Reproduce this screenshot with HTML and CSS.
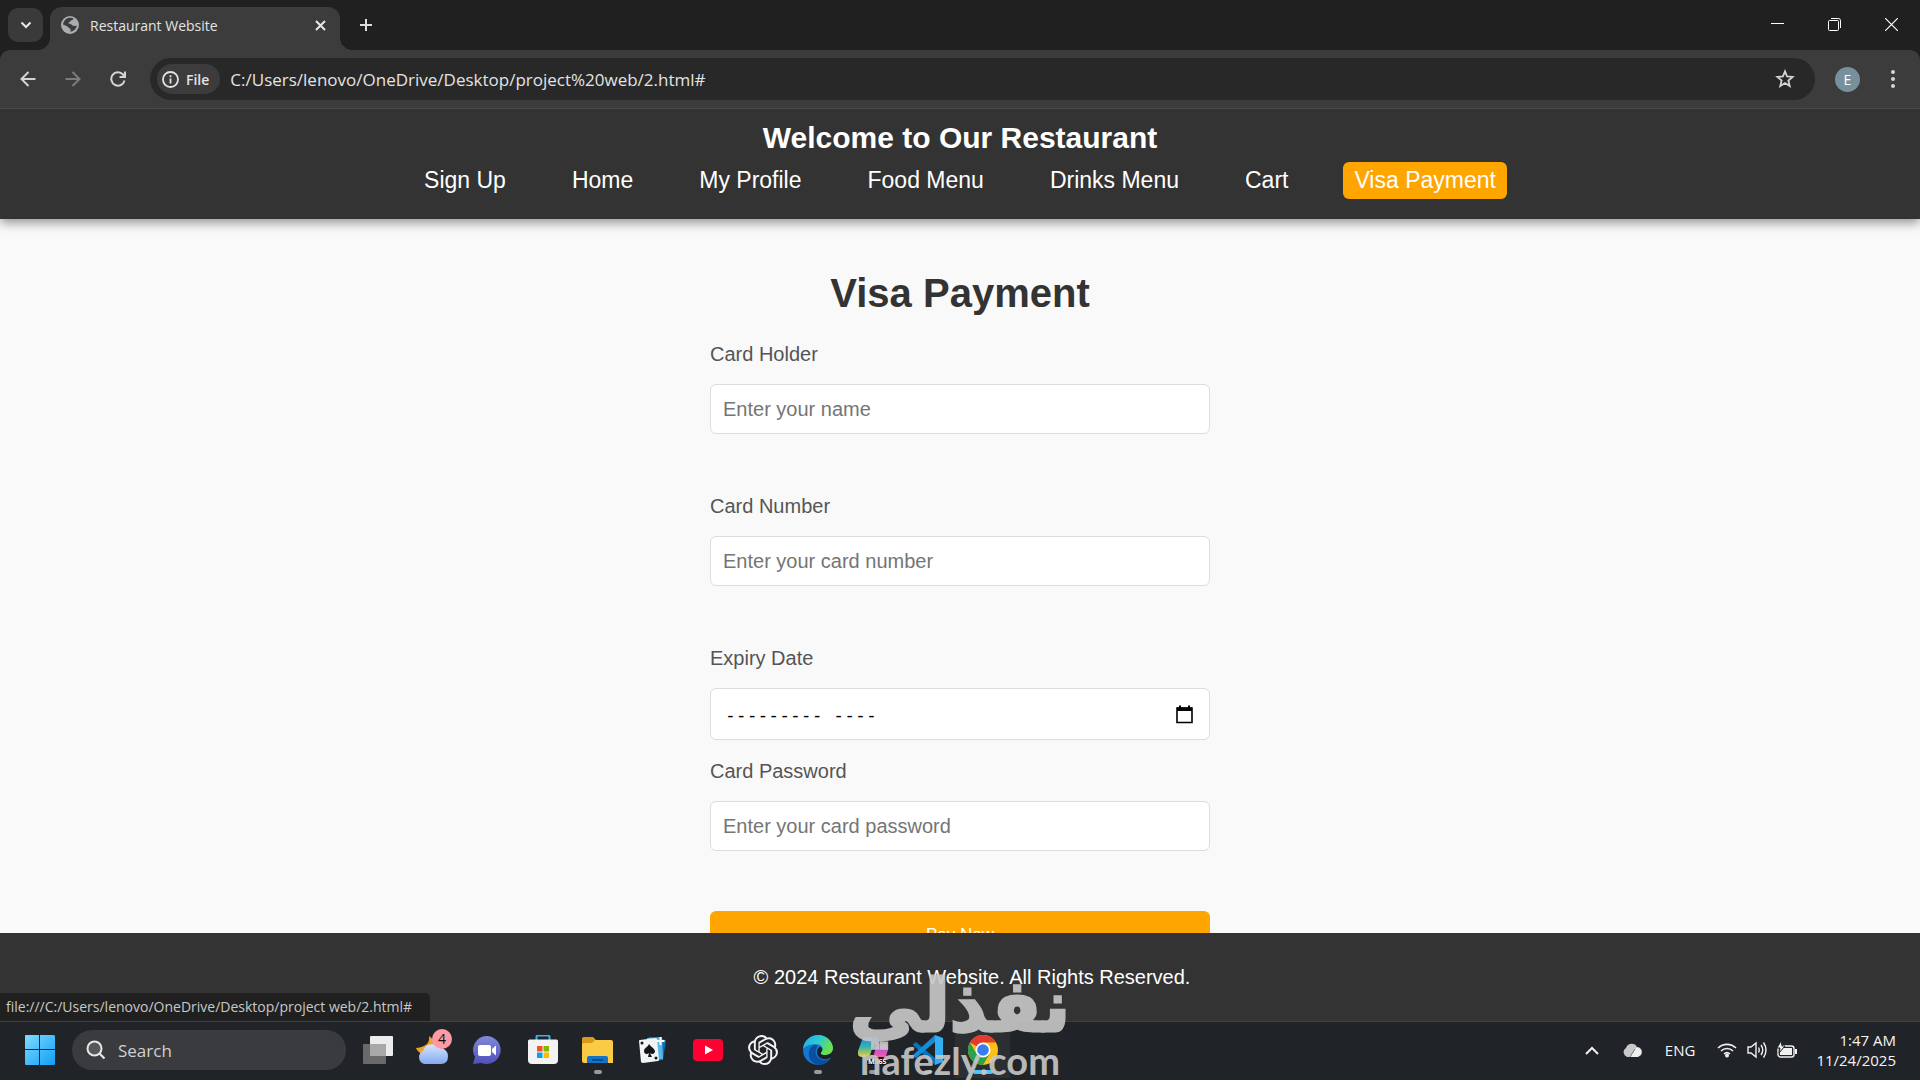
FILE: index.html
```html
<!DOCTYPE html>
<html lang="en">
<head>
  <meta charset="UTF-8">
  <meta name="viewport" content="width=device-width, initial-scale=1.0">
  <title>Restaurant Website</title>
  <link rel="stylesheet" href="styles.css">
</head>
<body>
  <!-- Browser tabs -->
  <div class="titlebar">
    <button class="tab-search" aria-label="Search tabs">
      <svg width="12" height="8" viewBox="0 0 12 8"><path d="M1.500 1.500l4.500 4.500 4.500-4.500" fill="none" stroke="#e8e8e8" stroke-width="2"/></svg>
    </button>
    <div class="tab">
      <svg width="18" height="18" viewBox="0 0 18 18"><circle cx="9" cy="9" r="9" fill="#a9acb0"/><path d="M7 2c2-.6 4-.4 5.500.5-.5 1.500-1.500 2-3 2-.3 1.500-1.300 2-2.500 2.200C8 8 10 7.600 11 9c.6 1 2 1 4.800.8-.6 3.200-3 5.500-6.300 6 0-2 .5-3-1-3.600C7 11.700 7 10.500 5.500 10L2 8.500C2.400 5.500 4.300 3 7 2z" fill="#3c3c3c"/></svg>
      <span class="tab-title">Restaurant Website</span>
      <button class="tab-close" aria-label="Close tab">
        <svg width="11" height="11" viewBox="0 0 11 11"><path d="M1 1l9 9M10 1l-9 9" stroke="#e8e8e8" stroke-width="2"/></svg>
      </button>
    </div>
    <button class="new-tab" aria-label="New tab">
      <svg width="14" height="14" viewBox="0 0 14 14"><path d="M7 1v12M1 7h12" stroke="#dcdcdc" stroke-width="2"/></svg>
    </button>
    <div class="window-buttons">
      <button aria-label="Minimize"><svg width="13" height="13" viewBox="0 0 13 13"><path d="M0 5.500h13" stroke="#fff"/></svg></button>
      <button aria-label="Restore"><svg width="13" height="13" viewBox="0 0 13 13"><path d="M.5 3.500q0-1 1-1h8q1 0 1 1v8q0 1-1 1h-8q-1 0-1-1zM3 .5h7.500q2 0 2 2V10" fill="none" stroke="#fff"/></svg></button>
      <button aria-label="Close"><svg width="13" height="13" viewBox="0 0 13 13"><path d="M0 0l13 13M13 0L0 13" stroke="#fff" stroke-width="1.200"/></svg></button>
    </div>
  </div>

  <!-- Address bar -->
  <div class="toolbar">
    <button class="tool" aria-label="Back"><svg width="16" height="16" viewBox="0 0 16 16"><path d="M15.500 8H2M8.500 1L1.500 8l7 7" fill="none" stroke="#d4d4d4" stroke-width="2"/></svg></button>
    <button class="tool" aria-label="Forward"><svg width="16" height="16" viewBox="0 0 16 16"><path d="M.5 8H14M7.500 1l7 7-7 7" fill="none" stroke="#7c7c7c" stroke-width="2"/></svg></button>
    <button class="tool" aria-label="Reload"><svg width="16" height="16" viewBox="0 0 16 16"><path d="M14.500 9.500A6.700 6.700 0 1 1 13 3.500l1.500 1.700" fill="none" stroke="#d4d4d4" stroke-width="2"/><path d="M15 .5v5.500H9.500" fill="none" stroke="#d4d4d4" stroke-width="2"/></svg></button>
    <div class="omnibox">
      <button class="file-chip">
        <svg width="17" height="17" viewBox="0 0 17 17"><circle cx="8.500" cy="8.500" r="7.500" fill="none" stroke="#e3e3e3" stroke-width="1.800"/><path d="M8.500 7.500v5M8.500 4.300v2" stroke="#e3e3e3" stroke-width="1.800"/></svg>
        File
      </button>
      <input class="url" type="text" aria-label="Address" value="C:/Users/lenovo/OneDrive/Desktop/project%20web/2.html#">
      <button class="star" aria-label="Bookmark"><svg width="20" height="20" viewBox="0 0 20 20"><path d="M10 2.300l2.100 5.200 5.500.4-4.200 3.600 1.300 5.500L10 14l-4.700 3 1.300-5.500L2.400 7.900l5.500-.4z" fill="none" stroke="#d4d4d4" stroke-width="1.800"/></svg></button>
    </div>
    <button class="tool" aria-label="Profile"><span class="avatar">E</span></button>
    <button class="tool" aria-label="Menu"><svg width="4" height="18" viewBox="0 0 4 18"><g fill="#d4d4d4"><circle cx="2" cy="2" r="2"/><circle cx="2" cy="9" r="2"/><circle cx="2" cy="16" r="2"/></g></svg></button>
  </div>

  <!-- Website -->
  <div class="page">
    <header>
      <h1>Welcome to Our Restaurant</h1>
      <nav>
        <a href="#">Sign Up</a>
        <a href="#">Home</a>
        <a href="#">My Profile</a>
        <a href="#">Food Menu</a>
        <a href="#">Drinks Menu</a>
        <a href="#">Cart</a>
        <a href="#" class="active">Visa Payment</a>
      </nav>
    </header>

    <main>
      <h2>Visa Payment</h2>
      <form>
        <label for="holder">Card Holder</label>
        <input type="text" id="holder" placeholder="Enter your name">
        <label for="number">Card Number</label>
        <input type="text" id="number" placeholder="Enter your card number">
        <label for="expiry">Expiry Date</label>
        <div class="date-field">
          <input type="text" id="expiry" placeholder="--------- ----">
          <button type="button" aria-label="Show month picker">
            <svg width="17" height="19" viewBox="0 0 17 19"><path d="M1 3h15v14.500H1z" fill="none" stroke="#000" stroke-width="1.600"/><path d="M1 2.500h15V6H1zM3 .5h2V3H3zM12 .5h2V3h-2z"/></svg>
          </button>
        </div>
        <label for="password">Card Password</label>
        <input type="password" id="password" placeholder="Enter your card password">
        <button type="submit" class="pay">Pay Now</button>
      </form>
    </main>

    <footer>&copy; 2024 Restaurant Website. All Rights Reserved.</footer>
    <div class="status">file:///C:/Users/lenovo/OneDrive/Desktop/project web/2.html#</div>
  </div>

  <!-- Windows taskbar -->
  <div class="taskbar">
    <button class="app" aria-label="Start">
      <svg width="30" height="30" viewBox="0 0 30 30"><defs><linearGradient id="win" x1="0" y1="0" x2="1" y2="1" gradientUnits="objectBoundingBox"><stop offset="0" stop-color="#7fdcff"/><stop offset="1" stop-color="#109df5"/></linearGradient></defs><path d="M1 0h13v14H0V1q0-1 1-1zM16 0h12q2 0 2 1v13H15V0zM0 15h14v15H1q-1 0-1-1zM15 15h15v14q0 1-1 1H15z" fill="url(#win)"/></svg>
    </button>
    <label class="search">
      <svg width="20" height="20" viewBox="0 0 20 20"><circle cx="8.500" cy="8.500" r="7" fill="#55585b" stroke="#e6e6e6" stroke-width="2"/><path d="M13.500 13.500l5 5" stroke="#e6e6e6" stroke-width="2.200"/></svg>
      <input type="text" placeholder="Search" aria-label="Search">
    </label>
    <button class="app" aria-label="Task view">
      <svg width="30" height="28" viewBox="0 0 30 28"><rect x="7" y="0" width="23" height="20" rx="1" fill="#ececec"/><rect x="0" y="8" width="23" height="20" rx="1" fill="#696969"/><path d="M7 8h16v12H7z" fill="#a8a8a8"/></svg>
    </button>
    <button class="app" aria-label="Weather">
      <svg width="36" height="38" viewBox="0 0 36 38"><defs><linearGradient id="cloud" x1="0" y1="0" x2="0" y2="1"><stop offset="0" stop-color="#d5e5ff"/><stop offset="1" stop-color="#82aaf0"/></linearGradient></defs><path d="M14 5c1 6-2 11-13 12 2 5 8 8 13 5 6-3 8-12 0-17z" fill="#f0a12c"/><path d="M9 33a7 7 0 0 1-1-13 9 9 0 0 1 16-3 8 8 0 0 1 9 8q0 8-7 8z" fill="url(#cloud)"/></svg>
      <span class="badge">4</span>
    </button>
    <button class="app" aria-label="Chat">
      <svg width="29" height="29" viewBox="0 0 29 29"><defs><linearGradient id="chat" x1="0" y1="0" x2="0" y2="1"><stop offset="0" stop-color="#8188d8"/><stop offset="1" stop-color="#4f50ba"/></linearGradient></defs><path d="M14.500 0a14 14 0 1 1-6 27L0 28l2-7A14 14 0 0 1 14.500 0z" fill="url(#chat)"/><rect x="5" y="9" width="13" height="11" rx="2" fill="#fff"/><path d="M19 13l4-3.500v10L19 16z" fill="#fff"/></svg>
    </button>
    <button class="app" aria-label="Store">
      <svg width="30" height="30" viewBox="0 0 30 30"><path d="M8.500 6V2q0-1.500 1.500-1.500h10q1.500 0 1.500 1.500v4" fill="none" stroke="#35b1ee" stroke-width="2"/><path d="M0 6q0-1.500 1.500-1.500h27Q30 4.500 30 6v19q0 4-4 4H4q-4 0-4-4z" fill="#f3f3f3"/><path d="M9 11h5.500v5.500H9z" fill="#f25022"/><path d="M15.500 11H21v5.500h-5.500z" fill="#7fba00"/><path d="M9 17.500h5.500V23H9z" fill="#00a4ef"/><path d="M15.500 17.500H21V23h-5.500z" fill="#ffb900"/></svg>
    </button>
    <button class="app running" aria-label="File Explorer">
      <svg width="31" height="28" viewBox="0 0 31 28"><path d="M0 3q0-2 2-2h9l4 4h14v9H0z" fill="#d99a1c"/><path d="M0 9q0-2 2-2h8l3-3h16q2 0 2 2v21H2q-2 0-2-2z" fill="#fccb45"/><path d="M5 27v-5q0-2 2-2h17q2 0 2 2v5z" fill="#1373c9"/><path d="M10 24h11" stroke="#083f78" stroke-width="1.500"/></svg>
    </button>
    <button class="app" aria-label="Solitaire">
      <svg width="30" height="30" viewBox="0 0 30 30"><path d="M11 2l17 3-3 20-15 1z" fill="#0d6fb5"/><path d="M9 3l15-1 1 22-14 2z" fill="#54b8ec"/><path d="M1 6q0-1 1-1l15-2q1 0 2 1l2 21q0 1-1 1L5 28q-1 0-2-1z" fill="#f1f4f5"/><path d="M11 9c2 3 5 4 6 7 0 3-3 4-5 2l2 4h-4l1-4c-2 2-5 1-5-2 0-3 4-4 5-7z" fill="#151515"/><circle cx="4" cy="8" r="1.500" fill="#151515"/><circle cx="18" cy="23" r="1.500" fill="#151515"/><path d="M22.500 2v8M18.500 6h8" stroke="#fff" stroke-width="2"/></svg>
    </button>
    <button class="app" aria-label="YouTube">
      <svg width="30" height="22" viewBox="0 0 30 22"><rect width="30" height="22" rx="4" fill="#ff0033"/><path d="M12 6.500l8 4.500-8 4.500z" fill="#fff"/></svg>
    </button>
    <button class="app" aria-label="ChatGPT">
      <svg width="30" height="30" viewBox="0 0 24 24"><path fill="#f2f2f2" d="M22.2819 9.8211a5.9847 5.9847 0 0 0-.5157-4.9108 6.0462 6.0462 0 0 0-6.5098-2.9A6.0651 6.0651 0 0 0 4.9807 4.1818a5.9847 5.9847 0 0 0-3.9977 2.9 6.0462 6.0462 0 0 0 .7427 7.0966 5.98 5.98 0 0 0 .511 4.9107 6.051 6.051 0 0 0 6.5146 2.9001A5.9847 5.9847 0 0 0 13.2599 24a6.0557 6.0557 0 0 0 5.7718-4.2058 5.9894 5.9894 0 0 0 3.9977-2.9001 6.0557 6.0557 0 0 0-.7475-7.0729zm-9.022 12.6081a4.4755 4.4755 0 0 1-2.8764-1.0408l.1419-.0804 4.7783-2.7582a.7948.7948 0 0 0 .3927-.6813v-6.7369l2.02 1.1686a.071.071 0 0 1 .038.052v5.5826a4.504 4.504 0 0 1-4.4945 4.4944zm-9.6607-4.1254a4.4708 4.4708 0 0 1-.5346-3.0137l.142.0852 4.783 2.7582a.7712.7712 0 0 0 .7806 0l5.8428-3.3685v2.3324a.0804.0804 0 0 1-.0332.0615L9.74 19.9502a4.4992 4.4992 0 0 1-6.1408-1.6464zM2.3408 7.8956a4.485 4.485 0 0 1 2.3655-1.9728V11.6a.7664.7664 0 0 0 .3879.6765l5.8144 3.3543-2.0201 1.1685a.0757.0757 0 0 1-.071 0l-4.8303-2.7865A4.504 4.504 0 0 1 2.3408 7.872zm16.5963 3.8558L13.1038 8.364 15.1192 7.2a.0757.0757 0 0 1 .071 0l4.8303 2.7913a4.4944 4.4944 0 0 1-.6765 8.1042v-5.6772a.79.79 0 0 0-.407-.667zm2.0107-3.0231l-.142-.0852-4.7735-2.7818a.7759.7759 0 0 0-.7854 0L9.409 9.2297V6.8974a.0662.0662 0 0 1 .0284-.0615l4.8303-2.7866a4.4992 4.4992 0 0 1 6.6802 4.66zM8.3065 12.863l-2.02-1.1638a.0804.0804 0 0 1-.038-.0567V6.0742a4.4992 4.4992 0 0 1 7.3757-3.4537l-.142.0805L8.704 5.459a.7948.7948 0 0 0-.3927.6813zm1.0976-2.3654l2.602-1.4998 2.6069 1.4998v2.9994l-2.5974 1.4997-2.6067-1.4997Z"/></svg>
    </button>
    <button class="app running" aria-label="Edge">
      <svg width="30" height="30" viewBox="0 0 30 30"><defs><linearGradient id="edge" x1="0" y1="0" x2="1" y2="0.500"><stop offset="0" stop-color="#1fa5ea"/><stop offset="0.500" stop-color="#2ccbd0"/><stop offset="1" stop-color="#6ee04a"/></linearGradient></defs><circle cx="15" cy="15" r="15" fill="#1278d2"/><path d="M0 14C1 5 8 0 15 0c9 0 15 7 15 13 0 5-4 7-8 7-5 0-5-2-3-4 2-4-2-7-6-7C6 9 1 12 0 14z" fill="url(#edge)"/><path d="M11 10c-7 3-8 17 4 20 6 0 10-3 12-6-9 4-18-3-13-12 1-1 1-2-3-2z" fill="#0a4e9f"/><path d="M19 16c-2 2-2 4 3 4 4 0 7-2 8-5v6l-3 2c-6 3-13 0-13-6 0-3 2-5 3-5 2 0 3 2 2 4z" fill="#1c2125"/></svg>
    </button>
    <button class="app running" aria-label="Microsoft 365">
      <svg width="30" height="30" viewBox="0 0 30 30"><defs><linearGradient id="m1" x1="0" y1="0" x2="0" y2="1"><stop offset="0" stop-color="#2188ee"/><stop offset="0.500" stop-color="#36b4a8"/><stop offset="1" stop-color="#f2cf3a"/></linearGradient><linearGradient id="m2" x1="0" y1="0" x2="0" y2="1"><stop offset="0" stop-color="#8b60ed"/><stop offset="0.500" stop-color="#e052c0"/><stop offset="1" stop-color="#f57b6c"/></linearGradient></defs><path d="M8 2h11q-3 3-4 9l-3 9q-1 2-4 2H4q-5 0-4-6L4 5q1-3 4-3z" fill="url(#m1)"/><path d="M19 9h7q5 0 4 6l-3 9q-1 3-4 3H12q3-2 4-8z" fill="url(#m2)"/><path d="M13 2h6l3 7h-5z" fill="#1c65d8"/><rect x="9" y="22" width="20" height="8" fill="#111"/><text class="m365" x="10" y="29">M365</text></svg>
    </button>
    <button class="app running" aria-label="Visual Studio Code">
      <svg width="30" height="30" viewBox="0 0 30 30"><path d="M0 9l3-2 19 16v7L1 11z" fill="#0873bd"/><path d="M0 21l3 2L22 7V0L1 19z" fill="#168bd8"/><path d="M22 0l8 3v24l-8 3z" fill="#35adf3"/></svg>
    </button>
    <button class="app running current" aria-label="Chrome">
      <svg width="30" height="30" viewBox="0 0 30 30"><circle cx="15" cy="15" r="15" fill="#fbc116"/><path d="M15 15L2 7.500A15 15 0 0 1 28 7.500H15z" fill="#e33b2e"/><path d="M2 7.500A15 15 0 0 0 15 30l6.500-11L15 15 8.500 18.700z" fill="#2da04e"/><circle cx="15" cy="15" r="7.500" fill="#fff"/><circle cx="15" cy="15" r="5.800" fill="#3b7cf0"/></svg>
    </button>

    <div class="tray">
      <button class="tray-up" aria-label="Show hidden icons"><svg width="14" height="9" viewBox="0 0 14 9"><path d="M1 8l6-6 6 6" fill="none" stroke="#f0f0f0" stroke-width="2"/></svg></button>
      <button class="tray-cloud" aria-label="OneDrive"><svg width="20" height="14" viewBox="0 0 20 14"><path d="M5 14a5 5 0 0 1-1-9 6 6 0 0 1 11-1 5 5 0 0 1 0 10z" fill="#c9c9c9"/><path d="M8 14l5-8q2-2 4-1a5 5 0 0 1-2 9z" fill="#efefef"/><path d="M8 14l5-8" stroke="#777"/></svg></button>
      <button class="lang">ENG</button>
      <button class="quick" aria-label="Network, volume and battery">
        <svg width="20" height="16" viewBox="0 0 20 16"><path d="M1 6a13 13 0 0 1 18 0M4 9a8.500 8.500 0 0 1 12 0M7 12a4.500 4.500 0 0 1 6 0" fill="none" stroke="#f0f0f0" stroke-width="1.600"/><circle cx="10" cy="13.500" r="2" fill="#f0f0f0"/></svg>
        <svg width="20" height="18" viewBox="0 0 20 18"><path d="M1 6h3l5-4v14l-5-4H1z" fill="none" stroke="#f0f0f0" stroke-width="1.400"/><path d="M11.500 6.500q1.500 2.500 0 5M14 4q3.500 5 0 10M16.500 1.500q5 7.500 0 15" fill="none" stroke="#f0f0f0" stroke-width="1.400"/></svg>
        <svg width="20" height="18" viewBox="0 0 20 18"><rect x="1" y="5" width="16" height="11" rx="2.500" fill="none" stroke="#f0f0f0" stroke-width="1.400"/><path d="M6 7h9v7H3v-3zM18 8h2v5h-2z" fill="#f0f0f0"/><path d="M4 0L0 7h3l-1 5 6-7H5z" fill="#f0f0f0" stroke="#202327"/></svg>
      </button>
      <button class="clock">1:47 AM<br>11/24/2025</button>
    </div>
  </div>

  <div class="watermark">
    <span class="watermark-ar" lang="ar">نفذلي</span>
    <span class="watermark-en">nafezly.com</span>
  </div>
</body>
</html>
```
FILE: styles.css
```css
* {
  box-sizing: border-box;
}
body {
  margin: 0;
  height: 100vh;
  display: flex;
  flex-direction: column;
  overflow: hidden;
  background-color: #202020;
  font-family: "Liberation Sans", Arial, sans-serif;
}
button {
  padding: 0;
  border: none;
  background: none;
  color: inherit;
  font-family: inherit;
  cursor: pointer;
}
svg {
  display: block;
}

/* Browser window */
.titlebar,
.toolbar,
.status,
.taskbar {
  font-family: "Open Sans", "Noto Sans", sans-serif;
  color: #e3e3e3;
}
.titlebar {
  display: flex;
  height: 50px;
  padding-left: 8px;
  background-color: #202020;
}
.tab-search {
  display: grid;
  place-items: center;
  width: 35px;
  height: 34px;
  margin-top: 8px;
  border-radius: 10px;
  background-color: #3a3a3a;
}
.tab {
  position: relative;
  display: flex;
  align-items: center;
  width: 290px;
  margin: 7px 0 0 7px;
  padding: 0 14px 7px 11px;
  border-radius: 12px 12px 0 0;
  background-color: #3c3c3c;
}
/* flared feet of the active tab */
.tab::before,
.tab::after {
  content: "";
  position: absolute;
  bottom: 0;
  width: 12px;
  height: 12px;
}
.tab::before {
  right: 100%;
  background: radial-gradient(circle at 0 0, transparent 12px, #3c3c3c 12px);
}
.tab::after {
  left: 100%;
  background: radial-gradient(circle at 100% 0, transparent 12px, #3c3c3c 12px);
}
.tab-title {
  flex: 1;
  margin-left: 11px;
  font-size: 14px;
}
.new-tab {
  align-self: flex-start;
  display: grid;
  place-items: center;
  width: 52px;
  height: 50px;
}
.window-buttons {
  display: flex;
  margin-left: auto;
}
.window-buttons button {
  display: grid;
  place-items: center;
  width: 57px;
  height: 48px;
}
.toolbar {
  display: flex;
  align-items: center;
  height: 59px;
  padding: 0 5px;
  border-bottom: 1px solid #4a4a4a;
  border-radius: 10px 10px 0 0;
  background-color: #3c3c3c;
}
.tool {
  display: grid;
  place-items: center;
  width: 45px;
  height: 42px;
}
.omnibox {
  flex: 1;
  display: flex;
  align-items: center;
  height: 42px;
  margin: 0 10px;
  padding: 0 20px 0 7px;
  border-radius: 21px;
  background-color: #282828;
}
.file-chip {
  display: flex;
  align-items: center;
  gap: 7px;
  height: 30px;
  padding: 0 11px 0 5px;
  border-radius: 15px;
  background-color: #3c3c3c;
  font-size: 14px;
  font-weight: 600;
}
.url {
  flex: 1;
  margin-left: 10px;
  padding: 0;
  border: none;
  outline: none;
  background: none;
  color: #e3e3e3;
  font-family: inherit;
  font-size: 17px;
}
.avatar {
  display: grid;
  place-items: center;
  width: 25px;
  height: 25px;
  border-radius: 50%;
  background-color: #78909c;
  color: #fff;
  font-size: 14px;
}

/* Website */
.page {
  position: relative;
  flex: 1;
  min-height: 0;
  display: flex;
  flex-direction: column;
  overflow: hidden;
  background-color: #f9f9f9;
}
header {
  position: relative;
  padding: 10px 0 20px;
  background-color: #333;
  color: #fff;
  text-align: center;
  box-shadow: 0 4px 10px rgba(0, 0, 0, 0.4);
}
h1 {
  margin: 0;
  font-size: 30px;
  line-height: 38px;
}
nav {
  display: flex;
  justify-content: center;
  gap: 44px;
  margin-top: 5px;
}
nav a {
  padding: 5px 11px;
  border-radius: 6px;
  color: #fff;
  font-size: 23px;
  line-height: 27px;
  text-decoration: none;
}
nav a.active,
nav a:hover {
  background-color: orange;
}
main {
  flex: 1;
  min-height: 0;
  overflow: hidden;
  padding-top: 50px;
}
h2 {
  margin: 0 0 25px;
  color: #333;
  font-size: 40px;
  line-height: 48px;
  text-align: center;
}
form {
  display: flex;
  flex-direction: column;
  width: 500px;
  margin: 0 auto;
}
form label {
  margin-bottom: 18px;
  color: #555;
  font-size: 20px;
  line-height: 24px;
}
form input {
  height: 50px;
  margin: 0 0 60px;
  padding: 12px;
  border: 1px solid #ddd;
  border-radius: 6px;
  background-color: #fff;
  font-family: inherit;
  font-size: 20px;
}
.date-field {
  display: flex;
  align-items: center;
  height: 52px;
  margin-bottom: 19px;
  padding-right: 16px;
  border: 1px solid #ddd;
  border-radius: 6px;
  background-color: #fff;
}
.date-field input {
  flex: 1;
  margin: 0;
  padding: 0 14px;
  border: none;
  background: none;
  font-family: "DejaVu Sans Mono", monospace;
  font-size: 18px;
}
.date-field input::placeholder {
  color: #000;
}
.pay {
  height: 47px;
  flex-shrink: 0;
  border-radius: 6px;
  background-color: orange;
  color: #fff;
  font-size: 17px;
}
footer {
  padding: 32px 0 32px 24px;
  background-color: #333;
  color: #fff;
  font-size: 20px;
  line-height: 24px;
  text-align: center;
}
.status {
  position: absolute;
  left: 0;
  bottom: 0;
  padding: 3px 18px 3px 6px;
  border-top-right-radius: 5px;
  background-color: #202020;
  font-size: 14px;
  line-height: 22px;
  color: #c8c8c8;
}

/* Taskbar */
.taskbar {
  display: flex;
  align-items: center;
  height: 59px;
  padding: 0 24px 2px 12px;
  border-top: 1px solid #3f4244;
  background-color: #202327;
}
.app {
  position: relative;
  display: grid;
  place-items: center;
  width: 55px;
  height: 100%;
}
.running::after {
  content: "";
  position: absolute;
  bottom: 4px;
  left: 24px;
  width: 8px;
  height: 4px;
  border-radius: 2px;
  background-color: #9a9a9a;
}
.current {
  background-color: #2b2f32;
}
.current::after {
  left: 18px;
  width: 20px;
  background-color: #4cc2ff;
}
.badge {
  position: absolute;
  top: 7px;
  right: 8px;
  width: 20px;
  border-radius: 10px;
  background-color: #ff99a4;
  color: #111;
  font-size: 14px;
  line-height: 20px;
}
.m365 {
  fill: #fff;
  font-size: 7px;
  font-weight: bold;
}
.search {
  display: flex;
  align-items: center;
  gap: 12px;
  width: 274px;
  height: 40px;
  margin: 0 4px 0 5px;
  padding: 0 14px;
  border-radius: 20px;
  background-color: #393b3e;
}
.search input {
  flex: 1;
  min-width: 0;
  padding: 0;
  border: none;
  outline: none;
  background: none;
  font-family: inherit;
  font-size: 17px;
}
.search input::placeholder {
  color: #d0d0d0;
}
.tray {
  display: flex;
  align-items: center;
  margin-left: auto;
  color: #f4f4f4;
}
.tray-cloud {
  margin: 0 23px;
}
.lang {
  font-size: 15px;
}
.quick {
  display: flex;
  align-items: center;
  gap: 10px;
  margin: 0 19px 0 22px;
}
.clock {
  font-size: 15px;
  line-height: 20px;
  text-align: right;
}

/* Site mark over the screen */
.watermark {
  position: absolute;
  left: 0;
  right: 0;
  bottom: 0;
  display: flex;
  flex-direction: column;
  align-items: center;
  color: #c8c8c8;
  font-family: "DejaVu Sans", sans-serif;
  font-weight: bold;
  opacity: 0.9;
  pointer-events: none;
}
.watermark-ar {
  font-size: 72px;
  line-height: 68px;
  -webkit-text-stroke: 3px #c8c8c8;
}
.watermark-en {
  font-family: Lato, sans-serif;
  font-size: 38px;
  line-height: 40px;
}
```
